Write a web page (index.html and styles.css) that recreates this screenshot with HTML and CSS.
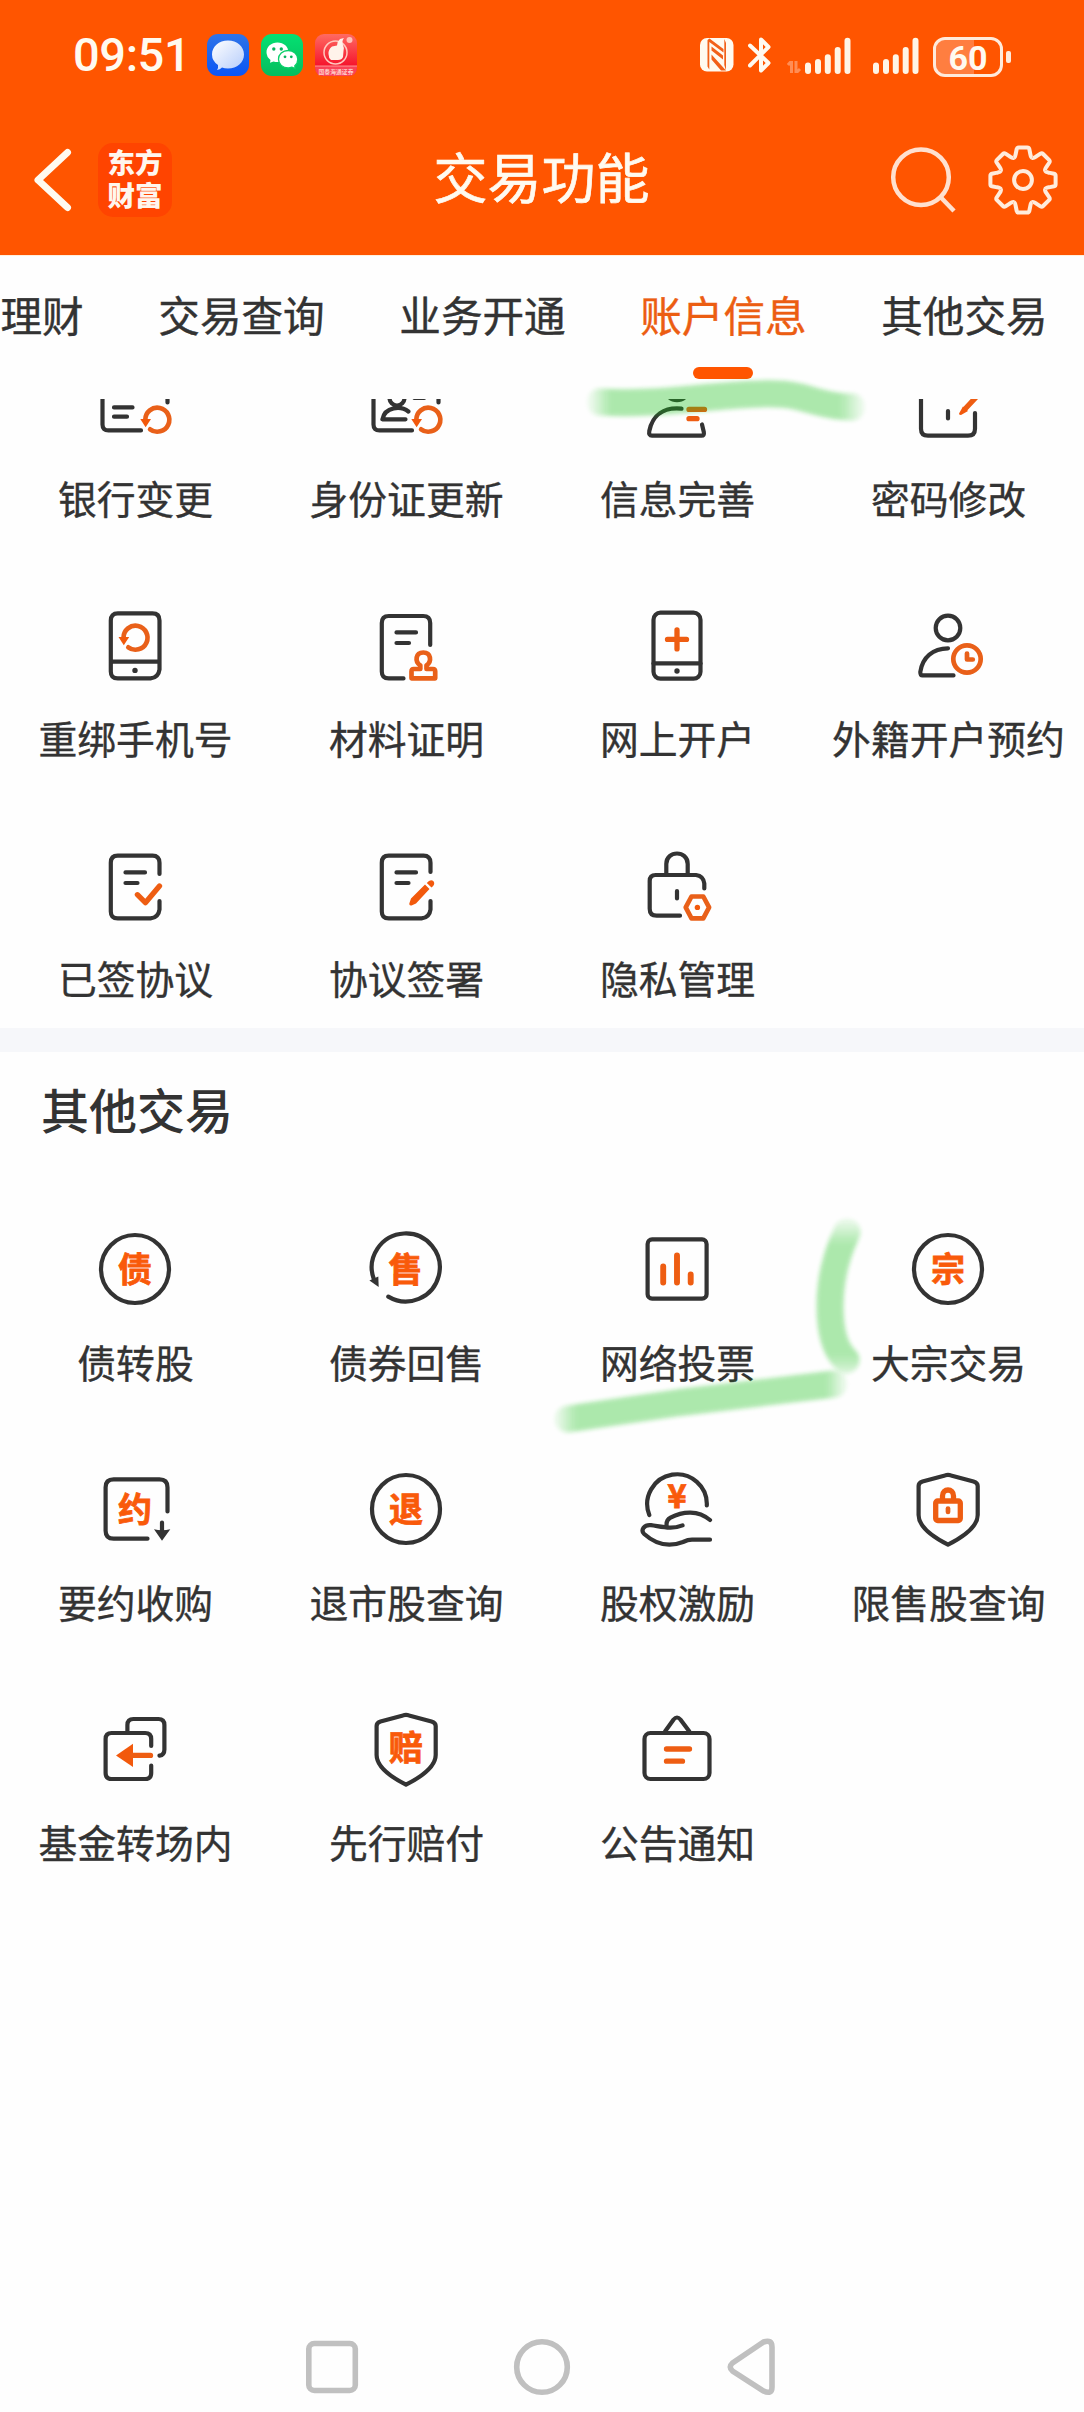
FILE: index.html
```html
<!DOCTYPE html>
<html lang="zh-CN">
<head>
<meta charset="utf-8">
<title>交易功能</title>
<link rel="stylesheet" href="styles.css">
</head>
<body>
<svg class="defs" aria-hidden="true">
  <defs>
    <g id="reload">
      <path class="o4" d="M-7.2 9.6A12 12 0 1 0-12 0"/>
      <path class="of" d="M-17-.8H-6.3L-11.7 7.6Z"/>
    </g>
    <path id="shield" class="d" d="M37 6.4Q40 5.2 43 6.4L65.5 12.6Q69.7 13.8 69.7 17V46C69.7 57 58 66.500 40 75.700C22 66.500 10.600 57 10.600 46V17Q10.600 13.800 14.500 12.600Z"/>
    <path id="tooth" d="M-9.18-22.170C-7.600-22.800-7.600-24.500-7.100-27L-6.300-31Q-5.900-32.600-4.200-32.600H4.200Q5.900-32.600 6.300-31L7.100-27C7.600-24.500 7.600-22.800 9.180-22.170"/>
    <g id="signal">
      <path d="M3 28.500V34M13 25V34M22.800 20.300V34M32.700 13V34M42.500 3.700V34"/>
    </g>
  </defs>
</svg>

<div class="screen">
  <header class="header">
    <div class="status">
      <span class="time">09:51</span>
      <div class="apps">
        <svg class="app" viewBox="0 0 42 42">
          <defs><linearGradient id="blue" x2="0" y2="1"><stop stop-color="#2f74e8"/><stop offset="1" stop-color="#0a55f5"/></linearGradient>
          <linearGradient id="bubble" x2="1" y2="1"><stop stop-color="#fff"/><stop offset="1" stop-color="#b5ccfb"/></linearGradient></defs>
          <rect width="42" height="42" rx="11" fill="url(#blue)"/>
          <path fill="url(#bubble)" d="M21 6.500C30 6.500 37 12.500 37 20.500S30 34.500 21 34.500Q17.500 34.500 15 33.500Q13 35.500 10 36Q11.500 33.500 11 31Q5 27 5 20.500C5 12.500 12 6.500 21 6.500Z"/>
        </svg>
        <svg class="app" viewBox="0 0 42 42">
          <defs><linearGradient id="green" x2="0" y2="1"><stop stop-color="#05e072"/><stop offset="1" stop-color="#05bd5e"/></linearGradient></defs>
          <rect width="42" height="42" rx="11" fill="url(#green)"/>
          <path fill="#fff" d="M16.500 8.500C22.800 8.500 27.500 12.800 27.500 18.300S22.800 28 16.500 28Q14.500 28 12.500 27.400L9 28.800 9.500 26Q5.500 23 5.500 18.300C5.500 12.800 10.200 8.500 16.500 8.500Z"/>
          <path fill="#fff" stroke="#08cf69" stroke-width="1.300" d="M27.200 16.500C32.500 16.500 36.800 20.500 36.800 25.200Q36.800 29.300 33.800 31.700L34.200 34.500 31 33.200Q29 34 27.200 34C21.500 34 17.500 30 17.500 25.200S21.500 16.500 27.200 16.500Z"/>
          <g fill="#08b45c"><circle cx="12.800" cy="15" r="1.700"/><circle cx="20.300" cy="15" r="1.700"/><circle cx="24" cy="22.800" r="1.400"/><circle cx="30.300" cy="22.800" r="1.400"/></g>
        </svg>
        <svg class="app" viewBox="0 0 42 42">
          <defs><linearGradient id="red" x2="0" y2="1"><stop stop-color="#ff6a62"/><stop offset=".75" stop-color="#f5152d"/></linearGradient></defs>
          <rect width="42" height="42" rx="9" fill="url(#red)"/>
          <path fill="#fa4257" d="M0 32H42V33Q42 42 33 42H9Q0 42 0 33Z"/>
          <path stroke="#ffb0a8" stroke-width=".8" d="M0 32H42"/>
          <circle cx="20.500" cy="18.500" r="11.500" fill="none" stroke="#ffc9bf" stroke-width="1.500"/>
          <path fill="#fff3ea" d="M17 12.500 22 11.500Q22.500 7 25 5L29 4Q26.500 7 28 11Q29.500 14 28.500 17L28 23Q27 26 23 26H16Q13.500 24 13.500 20Q13.300 15 17 12.500Z"/>
          <circle cx="34.500" cy="6" r="3" fill="#ffc2b8"/>
          <text class="app-text" x="21" y="39.500" textLength="35">国泰海通证券</text>
        </svg>
      </div>
      <div class="indicators">
        <svg width="34" height="34" viewBox="0 0 34 34">
          <rect width="33.500" height="33.500" rx="7" fill="#fffaf0"/>
          <path d="M7.500 2V28.500L9.300 31.500V4L23.500 14.500V11L9.500 .5ZM24.300 1V27L26 32.500V5Z" fill="#f26019"/>
          <path d="M11.500 8.500 23 17.500V21.500L11.500 12.500ZM11.500 16.500 26 32.500H21L11.500 21.500Z" fill="#f26019"/>
        </svg>
        <svg class="bt" width="23" height="38" viewBox="0 0 23 38">
          <path d="M2 9.500 20.500 27 13 34.500V3.500L20.500 11 2 29.500"/>
        </svg>
        <svg class="arrows" width="14" height="12" viewBox="0 0 14 12"><path d="M1 4 4.500 0V12M13 8 9 12V0"/></svg>
        <svg class="bars" width="46" height="40" viewBox="0 0 46 40"><use href="#signal" y="2"/></svg>
        <svg class="bars second" width="46" height="40" viewBox="0 0 46 40"><use href="#signal" y="2"/></svg>
        <svg class="battery" width="78" height="40" viewBox="0 0 78 40">
          <path d="M12 3H41V37H12Q3 37 3 28V12Q3 3 12 3Z" fill="#ff7e40"/>
          <rect x="1.500" y="1.500" width="67" height="37" rx="10.500" fill="none" stroke="#ffeadb" stroke-width="3"/>
          <rect x="73" y="14" width="5" height="12" rx="2" fill="#ffeadb"/>
          <text x="35" y="32.500">60</text>
        </svg>
      </div>
    </div>
    <div class="titlebar">
      <div class="left">
        <svg class="back" width="40" height="66" viewBox="0 0 40 66"><path d="M34.500 5.500 5 33 34.500 60.500"/></svg>
        <div class="brand">东方<br>财富</div>
      </div>
      <h1>交易功能</h1>
      <div class="tools">
        <svg width="70" height="70" viewBox="0 0 70 70"><circle cx="33" cy="32.300" r="27.800"/><path d="M52 51.500 66 66"/></svg>
        <svg class="gear" width="74" height="74" viewBox="-37 -37 74 74">
          <use href="#tooth"/><use href="#tooth" transform="rotate(45)"/><use href="#tooth" transform="rotate(90)"/><use href="#tooth" transform="rotate(135)"/><use href="#tooth" transform="rotate(180)"/><use href="#tooth" transform="rotate(225)"/><use href="#tooth" transform="rotate(270)"/><use href="#tooth" transform="rotate(315)"/>
          <circle r="8.900"/>
        </svg>
      </div>
    </div>
  </header>

  <nav class="tabs">
    <span class="tab">理财</span>
    <span class="tab">交易查询</span>
    <span class="tab">业务开通</span>
    <span class="tab active">账户信息</span>
    <span class="tab">其他交易</span>
  </nav>

  <main class="content">
    <section class="account">
      <div class="grid">
        <div class="item">
          <svg class="icon" viewBox="0 0 80 80"><path class="d" d="M46 64.400H13.500Q7.500 64.400 7.500 58.400V20Q7.500 14 13.500 14H66.500Q72.500 14 72.500 20V36.500M19 41.400H37.500M19 50.700H32"/><use href="#reload" x="62.300" y="53.700"/></svg>
          <span>银行变更</span>
        </div>
        <div class="item">
          <svg class="icon" viewBox="0 0 80 80"><path class="d" d="M46 64.400H13.500Q7.500 64.400 7.500 58.400V20Q7.500 14 13.500 14H66.500Q72.500 14 72.500 20V36.500M48.500 32H58M42.400 45.500C35 39.500 19 40.500 16.400 53.300H39.500"/><circle class="d" cx="31" cy="32" r="7.500"/><use href="#reload" x="62.300" y="53.700"/></svg>
          <span>身份证更新</span>
        </div>
        <div class="item">
          <svg class="icon" viewBox="0 0 80 80"><circle class="d" cx="40" cy="21.800" r="12.300"/><path class="d" d="M44.500 42.700C27 41 15.500 49 12.300 65Q11.500 69.700 15 69.700H64.500Q67.500 69.700 66.800 66L65 58.500"/><path class="o5" d="M52 43.400H67.500M52 52.700H60"/></svg>
          <span>信息完善</span>
        </div>
        <div class="item">
          <svg class="icon" viewBox="0 0 80 80"><path class="d" d="M13 30V62.700Q13 69.700 20 69.700H60Q67 69.700 67 62.700V47M40 45V52.500"/><path class="o5" stroke-width="6" d="M57 43 72 27"/><path class="of" d="M55 40.500 51 47.500Q51 49 53 49L60 45Z"/></svg>
          <span>密码修改</span>
        </div>

        <div class="item">
          <svg class="icon" viewBox="0 0 80 80"><path class="d" d="M22.800 7.400H57.500Q64.500 7.400 64.500 14.400V63.400Q63.500 71.400 55.500 72.400H22.800Q15.800 72.400 15.800 65.400V14.400Q15.800 7.400 22.800 7.400ZM15.800 55.700H64.500"/><circle class="df" cx="40" cy="64.400" r="2.700"/><use href="#reload" x="40.500" y="31.700"/></svg>
          <span>重绑手机号</span>
        </div>
        <div class="item">
          <svg class="icon" viewBox="0 0 80 80"><path class="d" d="M64.200 39V17Q64.200 10 57.200 10H22.800Q15.800 10 15.800 17V65.400Q15.800 72.400 22.800 72.400H37.500M30.500 26.400H50M30.500 37H43"/><path class="o4" d="M54.300 63V59.500C48.500 55.500 49.500 46.500 57.300 46.500S66 55.500 60.500 59.500V63H67Q69.200 63 69.200 65.500V72.300H45.500V65.500Q45.500 63 47.700 63Z"/></svg>
          <span>材料证明</span>
        </div>
        <div class="item">
          <svg class="icon" viewBox="0 0 80 80"><rect class="d" x="16.500" y="6.700" width="47" height="66" rx="7"/><path class="d" d="M16.500 57.400H63.500"/><circle class="df" cx="40" cy="65" r="2.700"/><path class="o5" d="M30.500 33.400H49.500M40 23.900V42.900"/></svg>
          <span>网上开户</span>
        </div>
        <div class="item">
          <svg class="icon" viewBox="0 0 80 80"><circle class="d" cx="40" cy="22" r="12.300"/><path class="d" d="M40 42.400C25 42.700 14.500 51 12.300 66Q12.300 69.400 14.500 69.400H45.500"/><circle class="o4" cx="59" cy="53" r="13.700"/><path class="o4" d="M59 47.500V53.500H64.800"/></svg>
          <span>外籍开户预约</span>
        </div>

        <div class="item">
          <svg class="icon" viewBox="0 0 80 80"><path class="d" d="M64.500 28V16.700Q64.500 9.700 57.500 9.700H22.800Q15.800 9.700 15.800 16.700V65.400Q15.800 72.400 22.800 72.400H55.500Q63.500 71.400 64.500 63.400V55M30.500 26.400H50M30.500 37H42.500"/><path class="o5" d="M42.400 48.700 50.400 56.700 64.500 40"/></svg>
          <span>已签协议</span>
        </div>
        <div class="item">
          <svg class="icon" viewBox="0 0 80 80"><path class="d" d="M64.500 26V16.700Q64.500 9.700 57.500 9.700H22.800Q15.800 9.700 15.800 16.700V65.400Q15.800 72.400 22.800 72.400H55.500Q63.500 71.400 64.500 63.400V55M30.500 26.400H50M30.500 37H42.500"/><path class="of" d="M59 38.500 63.500 43 50 57.500 45.500 59.500Q43 60 43.300 57.500L45 52.500ZM60.800 37Q64.500 32.500 67.700 35.500Q69.500 38.500 65.500 41.500Z"/></svg>
          <span>协议签署</span>
        </div>
        <div class="item">
          <svg class="icon" viewBox="0 0 80 80"><path class="d" d="M29.300 29V18C29.300 4 50.700 4 50.700 18V29M67.300 42.500V37.500Q66.500 30 59 29H18.700Q12.700 29 12.700 35V62.700Q12.700 69.700 19.700 69.700H43M40 45V52.500"/><path class="o4" d="M48.700 61.400 54.500 50.500H66.300L72.100 61.400 66.300 72.300H54.500Z"/><circle class="of" cx="60.400" cy="61.400" r="2.700"/></svg>
          <span>隐私管理</span>
        </div>
      </div>
    </section>

    <section class="others">
      <h2>其他交易</h2>
      <div class="grid">
        <div class="item">
          <svg class="icon" viewBox="0 0 80 80"><circle class="d" cx="40" cy="40" r="34"/><text x="40" y="52.500">债</text></svg>
          <span>债转股</span>
        </div>
        <div class="item">
          <svg class="icon" viewBox="0 0 80 80"><path class="d" d="M22.300 67.600A34 34 0 1 0 7.800 50"/><path class="df" d="M3.400 51.400 12.300 47.400 12.700 58Z"/><text x="39.500" y="52.500">售</text></svg>
          <span>债券回售</span>
        </div>
        <div class="item">
          <svg class="icon" viewBox="0 0 80 80"><rect class="d" x="10.600" y="10.400" width="59" height="59.300" rx="4.500"/><path class="o6" d="M26.200 37.500V53.500M40 26.500V53.500M53.700 45.500V53.500"/></svg>
          <span>网络投票</span>
        </div>
        <div class="item">
          <svg class="icon" viewBox="0 0 80 80"><circle class="d" cx="40" cy="40" r="34"/><text x="40" y="52.500">宗</text></svg>
          <span>大宗交易</span>
        </div>

        <div class="item">
          <svg class="icon" viewBox="0 0 80 80"><path class="d" d="M72.500 42.500V18.400Q72.500 10.400 64.500 10.400H18.600Q10.600 10.400 10.600 18.400V61.700Q10.600 69.700 18.600 69.700H52.500M67 53.500V63"/><path class="df" d="M59 60.200Q67 62.500 75.300 60.200L67 71.700Z"/><text x="40" y="52.500">约</text></svg>
          <span>要约收购</span>
        </div>
        <div class="item">
          <svg class="icon" viewBox="0 0 80 80"><circle class="d" cx="40" cy="40" r="34"/><text x="40" y="52.500">退</text></svg>
          <span>退市股查询</span>
        </div>
        <div class="item">
          <svg class="icon" viewBox="0 0 80 80"><path class="d" d="M12.300 46A29.800 29.800 0 1 1 69.800 36.500M73 51C61 41 46 42 33.500 48.700Q28.500 51.500 29.800 58M45.500 56.400C35 61 24 57.500 14 56.200C6.500 55.400 3.500 61.500 7.200 65C20 76.500 33 78 46 73Q51 70.700 55 70.700H73"/><text class="yen" x="40" y="39">¥</text></svg>
          <span>股权激励</span>
        </div>
        <div class="item">
          <svg class="icon" viewBox="0 0 80 80"><use href="#shield"/><path class="o5" d="M34.500 31V27C34.500 19 45.500 19 45.500 27V31"/><rect class="o5" x="27.700" y="32" width="24.600" height="19.500" rx="2"/><path class="o4" d="M40 39.500V43"/></svg>
          <span>限售股查询</span>
        </div>

        <div class="item">
          <svg class="icon" viewBox="0 0 80 80"><path class="d" d="M56.200 37V30Q56.200 24 50.200 24H16.600Q10.600 24 10.600 30V64Q10.600 70 16.600 70H50.200Q56.200 70 56.200 64V56.500M32.400 23V16Q32.400 10 38.400 10H63.400Q69.400 10 69.400 16V40.500Q69.400 46 64.500 46.700"/><path class="of" d="M21 46.400 38 34.700V58Z"/><path class="o5" d="M37 46.400H55.500"/></svg>
          <span>基金转场内</span>
        </div>
        <div class="item">
          <svg class="icon" viewBox="0 0 80 80"><use href="#shield"/><text x="40" y="50.500">赔</text></svg>
          <span>先行赔付</span>
        </div>
        <div class="item">
          <svg class="icon" viewBox="0 0 80 80"><rect class="d" x="7.500" y="24" width="65" height="46" rx="6"/><path class="d" d="M28 22.500 36.600 10.500Q40 6.500 43.400 10.500L52.400 22.500"/><path class="o5" d="M29.500 40H52.500M29.500 52.200H45.500"/></svg>
          <span>公告通知</span>
        </div>
      </div>
    </section>
  </main>

  <footer class="sysnav">
    <svg width="60" height="60" viewBox="0 0 60 60"><rect x="6.800" y="6.500" width="46.500" height="47" rx="5.500"/></svg>
    <svg width="60" height="60" viewBox="0 0 60 60"><circle cx="30" cy="30" r="25.300"/></svg>
    <svg width="60" height="60" viewBox="0 0 60 60"><path d="M10.500 26 41.500 5Q50 2 50 10V50Q50 58 41.500 54L10.500 34Q6 30 10.500 26Z"/></svg>
  </footer>

  <svg class="marker" viewBox="0 0 1084 2412" aria-hidden="true">
    <defs>
      <filter id="soft" filterUnits="userSpaceOnUse" x="500" y="350" width="420" height="1120"><feGaussianBlur stdDeviation="2.200"/></filter>
      <linearGradient id="m1" gradientUnits="userSpaceOnUse" x1="585" x2="868" y1="0" y2="0"><stop stop-color="#14c014" stop-opacity="0"/><stop offset=".09" stop-color="#14c014"/><stop offset=".9" stop-color="#14c014"/><stop offset="1" stop-color="#14c014" stop-opacity="0"/></linearGradient>
      <linearGradient id="m2" gradientUnits="userSpaceOnUse" x1="0" x2="0" y1="1216" y2="1374"><stop stop-color="#14c014" stop-opacity="0.100"/><stop offset=".18" stop-color="#14c014"/><stop offset=".88" stop-color="#14c014"/><stop offset="1" stop-color="#14c014" stop-opacity=".4"/></linearGradient>
      <linearGradient id="m3" gradientUnits="userSpaceOnUse" x1="550" x2="850" y1="0" y2="0"><stop stop-color="#14c014" stop-opacity="0"/><stop offset=".09" stop-color="#14c014"/><stop offset=".92" stop-color="#14c014"/><stop offset="1" stop-color="#14c014" stop-opacity="0"/></linearGradient>
    </defs>
    <path stroke="url(#m1)" d="M600 402C650 405 690 398 732 395.500C790 391 795 396 818 402Q836 407 852 407"/>
    <path stroke="url(#m2)" d="M847 1232Q830 1268 830 1306Q830 1345 846 1360"/>
    <path stroke="url(#m3)" d="M568 1419 680 1402.500 834 1384"/>
  </svg>
</div>
</body>
</html>
```

FILE: styles.css
```css
* { box-sizing: border-box; }

body {
  margin: 0;
  background: #fefefe;
  color: #333;
  font-family: "Noto Sans CJK SC", sans-serif;
}

svg { display: block; flex: none; }

.defs { position: absolute; width: 0; height: 0; }

.screen {
  position: relative;
  display: flex;
  flex-direction: column;
  width: 1084px;
  height: 2412px;
  overflow: hidden;
}

.header {
  height: 256px;
  background: #ff5500;
  border-bottom: 1px solid #fff0dd;
}

.status {
  display: flex;
  align-items: center;
  height: 110px;
  padding: 0 73px 0 73px;
}

.time {
  width: 134px;
  color: #fffaf0;
  font: 500 47px/56px Roboto, sans-serif;
  letter-spacing: -.4px;
}

.apps { display: flex; gap: 12px; }
.app { width: 42px; height: 42px; }
.app-text { fill: #ffd0cb; font-size: 5.800px; font-weight: 700; text-anchor: middle; }

.indicators {
  display: flex;
  align-items: center;
  margin-left: auto;
}

.bt { margin-left: 14.500px; fill: none; stroke: #fffaf0; stroke-width: 4; stroke-linecap: round; stroke-linejoin: round; }
.arrows { margin: 24px 0 0 16px; fill: none; stroke: #ff8d55; stroke-width: 3; }
.bars { margin-left: 4px; fill: none; stroke: #fff5e6; stroke-width: 6; stroke-linecap: round; }
.bars.second { margin-left: 22px; }
.battery { margin: 4px 0 0 14px; }
.battery text { fill: #fffaf0; font: 700 34px Roboto, sans-serif; text-anchor: middle; }

.titlebar {
  display: grid;
  grid-template-columns: 1fr auto 1fr;
  align-items: center;
  height: 140px;
  padding: 0 24px 0 33px;
}

.left { display: flex; align-items: center; gap: 25px; }
.back path { fill: none; stroke: #fffaf0; stroke-width: 7; stroke-linecap: round; stroke-linejoin: round; }

.brand {
  width: 74px;
  height: 74px;
  padding-top: 2px;
  border-radius: 15px;
  background: #ff4400;
  color: #fff6ee;
  font-size: 27.500px;
  font-weight: 900;
  line-height: 33px;
  text-align: center;
}

h1 {
  margin: -8px 0 0 -10px;
  color: #fffaf0;
  font-size: 54px;
  font-weight: 400;
  line-height: 72px;
  -webkit-text-stroke: .7px #fffaf0;
}

.tools { display: flex; align-items: center; justify-content: flex-end; gap: 28px; margin-right: 1px; }
.tools svg { fill: none; stroke: #ffe0cf; stroke-width: 4.500; }
.tools .gear { stroke: #ffecdc; stroke-width: 4; margin-right: -1px; }

.tabs {
  display: flex;
  gap: 74.600px;
  height: 143px;
  padding: 28px 0 0 .5px;
  overflow: hidden;
  background: #fefefe;
}

.tab {
  flex: none;
  font-size: 41.600px;
  line-height: 60px;
  -webkit-text-stroke: .4px;
}

.tab.active { color: #ec5d12; }
.tab.active::after {
  content: "";
  display: block;
  width: 60px;
  height: 12px;
  margin: 23px auto 0;
  border-radius: 6px;
  background: #ff5500;
}

.content { height: 1914px; overflow: hidden; }

.account {
  height: 653px;
  overflow: hidden;
  border-bottom: 24px solid #f6f7fa;
}
.account .grid { margin-top: -33.400px; }

.grid {
  display: grid;
  grid-template-columns: repeat(4, 271px);
  grid-auto-rows: 240px;
}

.item {
  display: flex;
  flex-direction: column;
  align-items: center;
  gap: 23.500px;
  font-size: 38.800px;
  line-height: 56px;
  white-space: nowrap;
  -webkit-text-stroke: .35px;
}

.icon { width: 80px; height: 80px; margin-right: 1px; -webkit-text-stroke: 0; }
.icon text {
  fill: #f95a0a;
  stroke: #f95a0a;
  stroke-width: .8;
  font-size: 34px;
  font-weight: 700;
  text-anchor: middle;
}
.icon .yen { font-size: 33px; }

.d, .o4, .o5, .o6 { fill: none; stroke-linecap: round; stroke-linejoin: round; }
.d { stroke: #333; stroke-width: 4.200; }
.df { fill: #333; }
.o4 { stroke: #e96019; stroke-width: 4.700; }
.o5 { stroke: #ee5d12; stroke-width: 5.300; }
.o6 { stroke: #ee5d12; stroke-width: 5.900; }
.of { fill: #f2590c; }

.others { padding-top: 21px; }

h2 {
  height: 156.300px;
  margin: 0;
  padding-left: 41px;
  font-size: 48px;
  font-weight: 500;
  line-height: 70px;
}

.sysnav {
  display: flex;
  gap: 150px;
  padding: 24px 0 0 302px;
}
.sysnav svg { fill: none; stroke: #c0c0c0; stroke-width: 5.600; }

/* Highlighter strokes lie over the page content. */
.marker {
  position: absolute;
  inset: 0;
  width: 1084px;
  height: 2412px;
  opacity: .35;
  pointer-events: none;
}
.marker path { fill: none; stroke-width: 27px; stroke-linecap: round; stroke-linejoin: round; filter: url(#soft); }
```
